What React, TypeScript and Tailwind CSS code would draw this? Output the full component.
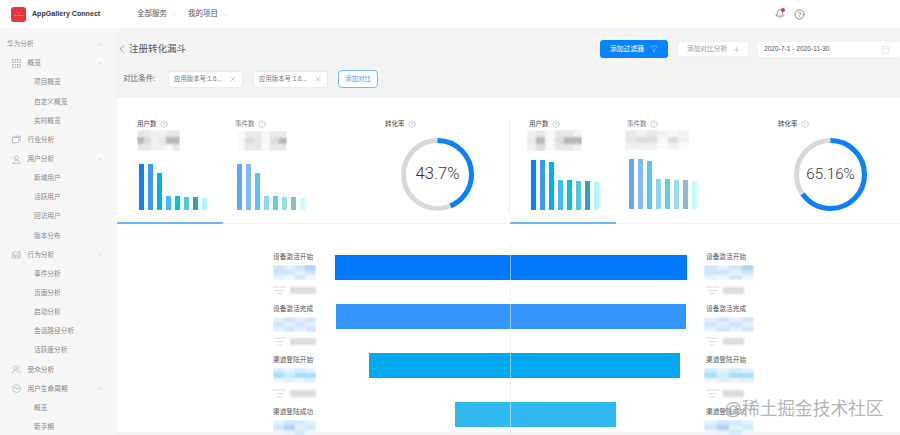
import React from "react";
import { Bell, Calendar, ChevronDown, ChevronLeft, ChevronUp, CircleHelp, Filter, Plus, X } from "lucide-react";

const fontStack = "[font-family:'Liberation_Sans','Noto_Sans_CJK_SC',sans-serif]";

type MenuRow = { text: string; level: 1 | 2 | 3; icon?: string; open?: boolean };

const menu: MenuRow[] = [
  { text: "华为分析", level: 1, open: true },
  { text: "概览", level: 2, icon: "grid", open: true },
  { text: "项目概览", level: 3 },
  { text: "自定义概览", level: 3 },
  { text: "实时概览", level: 3 },
  { text: "行业分析", level: 2, icon: "box" },
  { text: "用户分析", level: 2, icon: "user", open: true },
  { text: "新增用户", level: 3 },
  { text: "活跃用户", level: 3 },
  { text: "回访用户", level: 3 },
  { text: "版本分布", level: 3 },
  { text: "行为分析", level: 2, icon: "chart", open: true },
  { text: "事件分析", level: 3 },
  { text: "页面分析", level: 3 },
  { text: "启动分析", level: 3 },
  { text: "会话路径分析", level: 3 },
  { text: "活跃度分析", level: 3 },
  { text: "受众分析", level: 2, icon: "users" },
  { text: "用户生命周期", level: 2, icon: "life", open: true },
  { text: "概览", level: 3 },
  { text: "新手期", level: 3 },
];

function MenuIcon({ name }: { name?: string }) {
  const cls = "w-[9px] h-[9px] text-[#a0a0a0]";
  if (name === "grid")
    return (
      <svg viewBox="0 0 10 10" className={cls} fill="none" stroke="currentColor" strokeWidth="0.6">
        <rect x="0.5" y="0.5" width="3.6" height="3.6" />
        <rect x="5.9" y="0.5" width="3.6" height="3.6" />
        <rect x="0.5" y="5.9" width="3.6" height="3.6" />
        <rect x="5.9" y="5.9" width="3.6" height="3.6" />
      </svg>
    );
  if (name === "box")
    return (
      <svg viewBox="0 0 10 10" className={cls} fill="none" stroke="currentColor" strokeWidth="0.7">
        <path d="M1.8 1.4h7.4v5.4M.6 2.8h7v5.2l-5 .9H.6z" />
      </svg>
    );
  if (name === "user")
    return (
      <svg viewBox="0 0 10 10" className={cls} fill="none" stroke="currentColor" strokeWidth="0.6">
        <circle cx="5" cy="3" r="2.1" />
        <path d="M1 9.5c.3-2.5 2-3.6 4-3.6s3.7 1.1 4 3.6z" />
      </svg>
    );
  if (name === "chart")
    return (
      <svg viewBox="0 0 10 10" className={cls} fill="none" stroke="currentColor" strokeWidth="0.6">
        <path d="M.6 9.5V4.2h1.8v5.3M4 9.5V5.6h1.8v3.9M7.4 9.5V3h1.8v6.5M.6 2.8l3-1.2 2 1.4L9 .6" />
      </svg>
    );
  if (name === "users")
    return (
      <svg viewBox="0 0 10 10" className={cls} fill="none" stroke="currentColor" strokeWidth="0.6">
        <circle cx="3.8" cy="3" r="2" />
        <path d="M.4 9.4c.3-2.4 1.6-3.6 3.4-3.6s3.1 1.2 3.4 3.6M6.8 1.2c1.4.4 1.6 2.8.2 3.5M8 6c1 .6 1.5 1.8 1.6 3.2" />
      </svg>
    );
  return (
    <svg viewBox="0 0 10 10" className={cls} fill="none" stroke="currentColor" strokeWidth="0.6">
      <circle cx="5" cy="5" r="4.4" />
      <path d="M1.6 5.6 3.4 3.4 5 6.2l1.4-2 2 1.6" />
    </svg>
  );
}

function Sidebar() {
  return (
    <aside className="w-[117px] shrink-0 bg-[#f7f7f7] pt-[6.6px] overflow-hidden">
      {menu.map((row, i) => (
        <div
          key={i}
          className={`h-[19.15px] flex items-center text-[6.7px] ${
            row.level === 1 ? "pl-[7px] text-[#8c8c8c]" : row.level === 2 ? "pl-[12px] text-[#808080]" : "pl-[34px] text-[#888]"
          }`}
        >
          {row.icon && (
            <span className="w-[15.5px]">
              <MenuIcon name={row.icon} />
            </span>
          )}
          <span>{row.text}</span>
          {row.open && <ChevronUp className="absolute left-[97px] w-[7px] h-[7px] text-[#b5b5b5]" strokeWidth={1.2} />}
        </div>
      ))}
    </aside>
  );
}

function Header() {
  return (
    <header className="h-[28px] shrink-0 bg-white flex items-center pl-[11px]">
      <div className="w-[15px] h-[15px] rounded-[3px] bg-[#e8343c] flex flex-col items-center justify-center">
        <svg viewBox="0 0 10 4" className="w-[7px] h-[3px]" fill="none" stroke="#f7a8ac" strokeWidth="0.9">
          <path d="M2 .5 5 3l3-2.5" />
        </svg>
        <span className="text-[2.5px] leading-[3px] text-[#f9b9bc] font-bold">HUAWEI</span>
      </div>
      <span className="ml-[6px] w-[105px] text-[7.1px] font-bold text-[#333]">AppGallery Connect</span>
      <div className="flex items-center gap-[4px] text-[7.5px] text-[#555]">
        全部服务
        <ChevronDown className="w-[7px] h-[7px] text-[#999]" strokeWidth={1.2} />
      </div>
      <div className="ml-[10px] flex items-center gap-[4px] text-[7.5px] text-[#555]">
        我的项目
        <ChevronDown className="w-[7px] h-[7px] text-[#999]" strokeWidth={1.2} />
      </div>
      <div className="ml-[546px] relative flex items-center gap-[9px]">
        <Bell className="w-[10px] h-[10px] text-[#444]" strokeWidth={1.4} />
        <span className="absolute left-[6px] -top-[1px] w-[4px] h-[4px] rounded-full bg-[#e8303a]" />
        <CircleHelp className="w-[11px] h-[11px] text-[#444]" strokeWidth={1.3} />
      </div>
    </header>
  );
}

function Chip() {
  return (
    <div className="w-[75px] h-[17px] rounded-[3px] bg-white border border-[#ebebeb] flex items-center justify-between pl-[5px] pr-[5px] text-[6.4px] text-[#777]">
      <span>应用版本号:1.6...</span>
      <X className="w-[8px] h-[8px] text-[#888]" strokeWidth={1.2} />
    </div>
  );
}

function Toolbar() {
  return (
    <div className="h-[70px] shrink-0 pt-[12px]">
      <div className="h-[18px] flex items-center justify-between">
        <div className="flex items-center">
          <ChevronLeft className="-ml-[2px] w-[14px] h-[16px] text-[#4b9cec]" strokeWidth={1.3} />
          <span className="text-[9.5px] text-[#555]">注册转化漏斗</span>
        </div>
        <div className="flex items-center">
          <button className="w-[68px] h-[18px] rounded-[3px] bg-[#0a84fb] text-white text-[6.8px] flex items-center pl-[10px] gap-[6px]">
            添加过滤器
            <Filter className="w-[8px] h-[8px] text-[#cfe6ff]" strokeWidth={1} />
          </button>
          <button className="ml-[9px] w-[72px] h-[16px] rounded-[2px] bg-white border border-[#f0f0f0] text-[#999] text-[6.7px] flex items-center pl-[9px] gap-[5px]">
            添加对比分析
            <Plus className="w-[9px] h-[9px] text-[#a5a5a5]" strokeWidth={1.2} />
          </button>
          <div className="ml-[9px] w-[142px] h-[15px] rounded-[2px] bg-white flex items-center justify-between pl-[6px] pr-[10px] text-[6.6px] text-[#555]">
            2020-7-1 - 2020-11-30
            <Calendar className="w-[9px] h-[9px] text-[#ccc]" strokeWidth={1} />
          </div>
        </div>
      </div>
      <div className="mt-[12px] h-[18px] flex items-center pl-[6px]">
        <span className="w-[45px] text-[7.6px] text-[#666]">对比条件:</span>
        <Chip />
        <div className="ml-[10px]">
          <Chip />
        </div>
        <button className="ml-[10px] w-[40px] h-[18px] rounded-[4px] border border-[#7dbaf3] text-[#4a9cf0] text-[6.5px] bg-white">
          添加对比
        </button>
      </div>
    </div>
  );
}

// blurred out numbers in the screenshot
function Mosaic({ className, cols, cells }: { className: string; cols: string; cells: string[] }) {
  return (
    <div className={`overflow-hidden ${className}`}>
      <div className={`grid h-full w-full blur-[1.2px] ${cols}`}>
        {cells.map((c, i) => (
          <div key={i} className={c} />
        ))}
      </div>
    </div>
  );
}

const a = "bg-[#f2f2f2]";
const b = "bg-[#e8e8e8]";
const c = "bg-[#dcdcdc]";
const d = "bg-[#b8b8b8]";
const w = "bg-[#fafafa]";

const usersA = [b, b, a, a, b, b, d, c, a, b, d, d, b, b, a, a, w, b];
const eventsA = [w, b, b, w, b, b, w, c, b, w, c, d, w, b, b, w, b, b];
const usersB = [a, b, w, b, b, a, b, d, w, c, d, d, a, c, w, b, b, a];
const eventsB = [b, a, b, a, w, a, b, c, c, w, c, a, a, a, a, w, a, w];

type MiniBar = { h: string; color: string };

const leftUsers: MiniBar[] = [
  { h: "h-[46px]", color: "bg-[#0a80fb]" },
  { h: "h-[46px]", color: "bg-[#3b99fb]" },
  { h: "h-[37px]", color: "bg-[#07aee8]" },
  { h: "h-[14px]", color: "bg-[#41bbf0]" },
  { h: "h-[14px]", color: "bg-[#0fc2c6]" },
  { h: "h-[13px]", color: "bg-[#52cbd0]" },
  { h: "h-[13px]", color: "bg-[#3b9fae]" },
  { h: "h-[12px]", color: "bg-[#b1f6fb]" },
];
const leftEvents: MiniBar[] = [
  { h: "h-[46px]", color: "bg-[#63a8f6]" },
  { h: "h-[46px]", color: "bg-[#80b8f8]" },
  { h: "h-[37px]", color: "bg-[#58c6ee]" },
  { h: "h-[14px]", color: "bg-[#8dd5f2]" },
  { h: "h-[14px]", color: "bg-[#62d0d6]" },
  { h: "h-[13px]", color: "bg-[#95e0e6]" },
  { h: "h-[13px]", color: "bg-[#8cbcc6]" },
  { h: "h-[12px]", color: "bg-[#c8f8fb]" },
];
const rightUsers: MiniBar[] = [
  { h: "h-[50px]", color: "bg-[#0a80fb]" },
  { h: "h-[50px]", color: "bg-[#3b99fb]" },
  { h: "h-[48px]", color: "bg-[#07aee8]" },
  { h: "h-[30px]", color: "bg-[#41bbf0]" },
  { h: "h-[30px]", color: "bg-[#0fc2c6]" },
  { h: "h-[29px]", color: "bg-[#52cbd0]" },
  { h: "h-[29px]", color: "bg-[#3b9fae]" },
  { h: "h-[28px]", color: "bg-[#b1f6fb]" },
];
const rightEvents: MiniBar[] = [
  { h: "h-[50px]", color: "bg-[#63a8f6]" },
  { h: "h-[50px]", color: "bg-[#80b8f8]" },
  { h: "h-[48px]", color: "bg-[#58c6ee]" },
  { h: "h-[30px]", color: "bg-[#8dd5f2]" },
  { h: "h-[30px]", color: "bg-[#62d0d6]" },
  { h: "h-[29px]", color: "bg-[#95e0e6]" },
  { h: "h-[29px]", color: "bg-[#8cbcc6]" },
  { h: "h-[28px]", color: "bg-[#c8f8fb]" },
];

function MetricLabel({ text, dark }: { text: string; dark?: boolean }) {
  return (
    <div className={`h-[9px] flex items-center gap-[3px] text-[6.5px] ${dark ? "text-[#444]" : "text-[#777]"}`}>
      {text}
      <CircleHelp className="w-[8px] h-[8px] text-[#999]" strokeWidth={1.2} />
    </div>
  );
}

function Bars({ bars }: { bars: MiniBar[] }) {
  return (
    <div className="h-[50px] flex items-end gap-[4px]">
      {bars.map((bar, i) => (
        <div key={i} className={`w-[5px] ${bar.h} ${bar.color}`} />
      ))}
    </div>
  );
}

function Donut({ percent, label, textSize }: { percent: number; label: string; textSize: string }) {
  const r = 34;
  const len = 2 * Math.PI * r;
  return (
    <div className="relative w-[73px] h-[73px]">
      <svg viewBox="0 0 73 73" className="w-[73px] h-[73px] -rotate-90">
        <circle cx="36.5" cy="36.5" r={r} fill="none" stroke="#d9d9d9" strokeWidth="5" />
        <circle
          cx="36.5"
          cy="36.5"
          r={r}
          fill="none"
          stroke="#0a80fb"
          strokeWidth="5"
          strokeDasharray={`${(percent / 100) * len} ${len}`}
        />
      </svg>
      <div className={`absolute inset-0 flex items-center justify-center text-[#333] [font-family:Roboto,sans-serif] font-light ${textSize}`}>
        {label}
      </div>
    </div>
  );
}

function MetricHalf(props: {
  firstCol: string;
  secondCol: string;
  thirdCol: string;
  usersMosaic: React.ReactNode;
  eventsMosaic: React.ReactNode;
  users: MiniBar[];
  events: MiniBar[];
  percent: number;
  label: string;
  textSize: string;
}) {
  return (
    <div className="relative h-[126px] flex flex-col justify-between">
      <div className="flex pt-[21px]">
        <div className={props.firstCol}>
          <MetricLabel text="用户数" dark />
          {props.usersMosaic}
          <div className="mt-[9px] ml-[2px]">
            <Bars bars={props.users} />
          </div>
        </div>
        <div className={props.secondCol}>
          <MetricLabel text="事件数" />
          {props.eventsMosaic}
          <div className="mt-[9px] ml-[2px]">
            <Bars bars={props.events} />
          </div>
        </div>
        <div className={props.thirdCol}>
          <MetricLabel text="转化率" dark />
          <div className="mt-[9.5px] ml-[16px]">
            <Donut percent={props.percent} label={props.label} textSize={props.textSize} />
          </div>
        </div>
      </div>
      <div className="w-[106px] h-[2px] bg-[#6fb4f3]" />
    </div>
  );
}

const p = "bg-[#e6f1fd]";
const q = "bg-[#d0e5fb]";
const s = "bg-[#aed2f8]";
const t = "bg-[#f2f8fe]";
const u = "bg-[#cdedfb]";
const v = "bg-[#a6def6]";

const funnelCells = [
  [q, p, q, s, q, q, p, q, p, t, q, t],
  [p, q, p, q, q, p, q, p, p, q, p, q],
  [u, p, u, p, v, u, v, v, t, p, t, p],
  [p, q, u, p, q, s, p, u, t, p, u, t],
];

function FunnelLabels({ side }: { side: "left" | "right" }) {
  const names = ["设备激活开始", "设备激活完成", "渠道登陆开始", "渠道登陆成功"];
  return (
    <div className="w-[62px] shrink-0 pt-[29px]">
      {names.map((name, i) => (
        <div key={i} className="h-[51.6px]">
          <div className="h-[8px] flex items-center text-[6.7px] text-[#555] whitespace-nowrap">{name}</div>
          <Mosaic
            className={`mt-[4px] h-[15px] ${side === "left" ? "w-[43px]" : "-ml-[2px] w-[50px]"}`}
            cols="grid-cols-4"
            cells={funnelCells[i]}
          />
          {i < 3 && (
            <div className="mt-[5.5px] flex items-center gap-[4px]">
              <svg viewBox="0 0 13 9" className="w-[13px] h-[9px]" fill="none" stroke="#cfcfcf" strokeWidth="0.7">
                <path d="M0 1h13M2 4.5h9M4 8h5" />
              </svg>
              <div className={`h-[7px] rounded-[1px] bg-[#dcdcdc] blur-[0.8px] ${side === "left" ? "w-[26px]" : "w-[21px]"}`} />
            </div>
          )}
        </div>
      ))}
    </div>
  );
}

const funnelBars = [
  { cls: "ml-0 w-[352px] bg-[#0079fe]" },
  { cls: "ml-[0.5px] w-[350.5px] bg-[#3396fb]" },
  { cls: "ml-[34px] w-[311px] bg-[#02a9ee]" },
  { cls: "ml-[120px] w-[161px] bg-[#2fb9ef]" },
];

function Funnel() {
  return (
    <div className="flex pl-[156px]">
      <FunnelLabels side="left" />
      <div className="relative w-[371px] shrink-0 pt-[31px]">
        {funnelBars.map((bar, i) => (
          <div key={i} className={`h-[25px] mb-[24px] ${bar.cls}`} />
        ))}
        <div className="absolute left-[175px] top-[20px] bottom-0 w-px bg-[#dfe9f2]/60" />
      </div>
      <FunnelLabels side="right" />
    </div>
  );
}

export default function App() {
  return (
    <div className={`relative w-[900px] h-[435px] overflow-hidden flex flex-col bg-[#f4f4f5] ${fontStack}`}>
      <Header />
      <div className="flex flex-1 min-h-0">
        <Sidebar />
        <main className="flex-1 min-w-0 flex flex-col">
          <Toolbar />
          <section className="h-[334px] bg-white">
            <div className="flex h-[126px] border-b border-[#f3f3f3]">
              <div className="w-[392px] shrink-0">
                <MetricHalf
                  firstCol="w-[98px] ml-[20px]"
                  secondCol="w-[150px]"
                  thirdCol="w-[100px]"
                  usersMosaic={<Mosaic className="mt-[2px] w-[43px] h-[21px]" cols="grid-cols-6" cells={usersA} />}
                  eventsMosaic={<Mosaic className="mt-[3px] ml-[2px] w-[50px] h-[20px]" cols="grid-cols-6" cells={eventsA} />}
                  users={leftUsers}
                  events={leftEvents}
                  percent={43.7}
                  label="43.7%"
                  textSize="text-[16.6px]"
                />
              </div>
              <div className="w-px h-[95px] mt-[20px] bg-[#efefef] shrink-0" />
              <div className="flex-1">
                <MetricHalf
                  firstCol="w-[98px] ml-[19px]"
                  secondCol="w-[151px]"
                  thirdCol="w-[100px]"
                  usersMosaic={<Mosaic className="mt-[2px] -ml-[2px] w-[55px] h-[21px]" cols="grid-cols-6" cells={usersB} />}
                  eventsMosaic={<Mosaic className="mt-[2px] -ml-[2px] w-[64px] h-[20px]" cols="grid-cols-6" cells={eventsB} />}
                  users={rightUsers}
                  events={rightEvents}
                  percent={65.16}
                  label="65.16%"
                  textSize="text-[15.2px]"
                />
              </div>
            </div>
            <Funnel />
          </section>
        </main>
      </div>
      <div className="absolute left-[724px] top-[396px] text-[17.7px] leading-[26px] text-[#b5b5b5] whitespace-nowrap">
        @稀土掘金技术社区
      </div>
    </div>
  );
}
